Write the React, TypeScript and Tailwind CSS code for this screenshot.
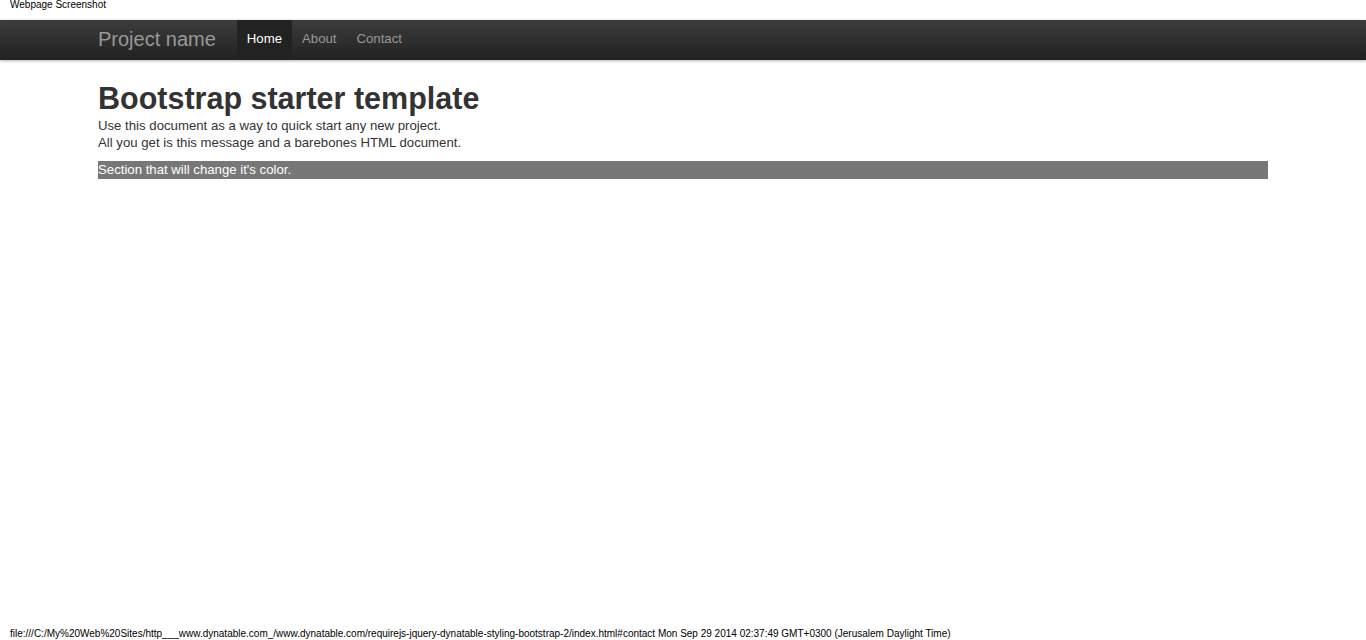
export default function App() {
  return (
    <div className="relative h-[640px] w-[1366px] overflow-hidden bg-white font-['Liberation_Sans',Arial,sans-serif] text-[#333]">
      <div className="h-[20px] pl-[10px] text-[10px] leading-[10px] text-black">
        Webpage Screenshot
      </div>
      <nav className="h-[40px] bg-gradient-to-b from-[#3c3c3c] to-[#222] shadow-[0_1px_3px_rgba(0,0,0,0.3)]">
        <div className="mx-auto flex h-full w-[1170px] items-stretch">
          <a className="flex items-center pb-[3px] pr-[20px] text-[20px] text-[#999]">Project name</a>
          <ul className="flex items-stretch pl-[1px] text-[13.2px]">
            <li className="flex items-center bg-[#222] px-[10px] pb-[2px] text-white">Home</li>
            <li className="flex items-center px-[10px] pb-[2px] text-[#999]">About</li>
            <li className="flex items-center px-[10px] pb-[2px] text-[#999]">Contact</li>
          </ul>
        </div>
      </nav>
      <div className="mx-auto w-[1170px] pt-[20px]">
        <h1 className="text-[30.5px] font-bold leading-[36px] text-[#333]">Bootstrap starter template</h1>
        <p className="mt-[1px] text-[13.2px] leading-[17px]">
          Use this document as a way to quick start any new project.
          <br />
          All you get is this message and a barebones HTML document.
        </p>
        <div className="mt-[10px] h-[18px] bg-[#777] text-[13.2px] leading-[18px] text-white">
          Section that will change it's color.
        </div>
      </div>
      <div className="absolute bottom-0 left-[10px] text-[10px] leading-[12px] text-black">
        file:///C:/My%20Web%20Sites/http___www.dynatable.com_/www.dynatable.com/requirejs-jquery-dynatable-styling-bootstrap-2/index.html#contact Mon Sep 29 2014 02:37:49 GMT+0300 (Jerusalem Daylight Time)
      </div>
    </div>
  );
}
